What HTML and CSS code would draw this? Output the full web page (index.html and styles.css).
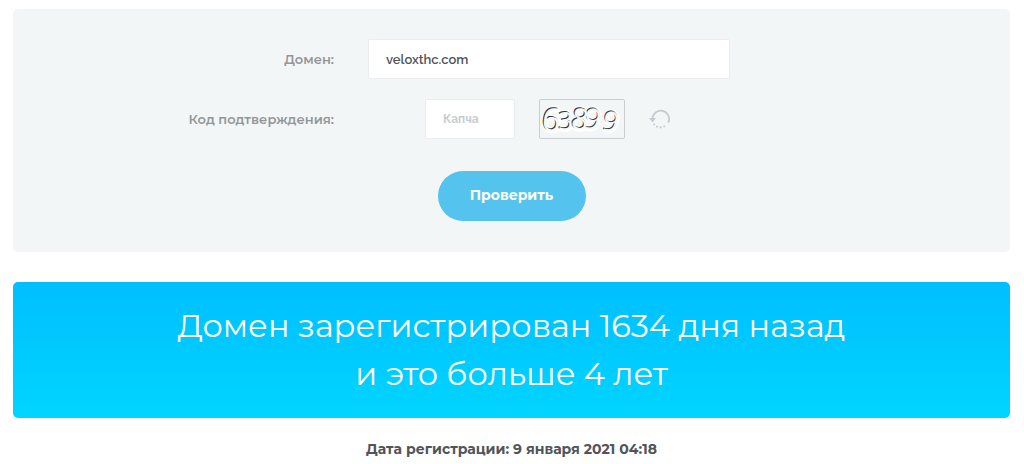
FILE: index.html
```html
<!DOCTYPE html>
<html lang="ru">
<head>
    <meta charset="UTF-8">
    <meta name="viewport" content="width=device-width, initial-scale=1.0">
    <title>Возраст домена</title>
    <link rel="stylesheet" href="styles.css">
</head>
<body>
    <form class="check-form">
        <div class="row">
            <label for="domain">Домен:</label>
            <input class="field domain" type="text" id="domain" name="domain" value="veloxthc.com">
        </div>
        <div class="row">
            <label for="captcha">Код подтверждения:</label>
            <div class="captcha">
                <input class="field code" type="text" id="captcha" name="captcha" placeholder="Капча">
                <svg class="captcha-image" viewBox="0 0 86 40" role="img" aria-label="Капча">
                    <defs>
                        <g id="digits">
                            <text x="0" y="32" font-size="34" transform="rotate(6 10 20)">6</text>
                            <text x="17" y="31" font-size="27">3</text>
                            <text x="31" y="30" font-size="31" transform="rotate(8 40 20)">8</text>
                            <text x="44" y="30" font-size="31" transform="rotate(12 52 20)">9</text>
                            <text x="64" y="32" font-size="29" transform="rotate(12 72 22)">9</text>
                        </g>
                    </defs>
                    <use class="digits-glow" href="#digits" x="1" y="1"/>
                    <use class="digits-dark" href="#digits"/>
                    <use class="digits-light" href="#digits" x="1" y="1"/>
                </svg>
                <button class="refresh" type="button" aria-label="Обновить">
                    <svg viewBox="0 0 22 22" width="22" height="22">
                        <path d="M3.5 11a8.3 8.3 0 1 1 15.8 3.6" fill="none" stroke="currentColor" stroke-width="1.8"/>
                        <path d="M0 10h7l-3.5 4.5z" fill="currentColor"/>
                        <g fill="currentColor">
                            <circle cx="5.2" cy="16.6" r="1"/>
                            <circle cx="8" cy="18.7" r="1"/>
                            <circle cx="11.7" cy="19.4" r="1.1"/>
                            <circle cx="15.3" cy="18.4" r="1"/>
                        </g>
                    </svg>
                </button>
            </div>
        </div>
        <button class="submit" type="submit">Проверить</button>
    </form>

    <div class="result">Домен зарегистрирован 1634 дня назад<br>и это больше 4 лет</div>
    <p class="date">Дата регистрации: 9 января 2021 04:18</p>
</body>
</html>
```

FILE: styles.css
```css
* {
    box-sizing: border-box;
}
body {
    margin: 9px 14px 0 13px;
    font-family: Montserrat, Inter, sans-serif;
    font-size: 13px;
    color: #50555a;
    background: #fff;
}
.check-form {
    display: flex;
    flex-direction: column;
    gap: 20px;
    padding: 30px 0 31px;
    border-radius: 5px;
    background: #f3f6f7;
}
.row {
    display: grid;
    grid-template-columns: 32.2% 36.3%;
    column-gap: 34px;
    align-items: center;
}
label {
    text-align: right;
    font-weight: 600;
    color: #929698;
}
.field {
    height: 40px;
    padding: 0 17px;
    border: 1px solid #eaedf0;
    border-radius: 2px;
    background: #fff;
    font-family: Raleway, "Open Sans", sans-serif;
    font-size: 13px;
    font-weight: 600;
    color: #50555a;
}
.field::placeholder {
    color: #c8ccd2;
    opacity: 1;
}
.domain {
    width: 100%;
}
.code {
    width: 90px;
    font-size: 12px;
    font-weight: 700;
}
.captcha {
    display: flex;
    justify-content: center;
    align-items: center;
    gap: 24px;
    padding-right: 2px;
}
.captcha-image {
    width: 86px;
    height: 40px;
    border: 1px solid #c9cdcf;
    border-radius: 2px;
    font-family: "Open Sans", sans-serif;
}
.digits-glow {
    fill: #fff;
    stroke: #fff;
    stroke-width: 4px;
    stroke-linejoin: round;
}
.digits-dark {
    fill: #333;
}
.digits-light {
    fill: #f6f8f9;
}
.refresh {
    display: flex;
    padding: 0;
    border: 0;
    background: none;
    color: #c6cbd0;
    cursor: pointer;
}
.submit {
    align-self: center;
    width: 148px;
    height: 50px;
    margin-top: 12px;
    padding: 0 0 2px;
    border: 0;
    border-radius: 25px;
    background: #54c3ed;
    color: #fff;
    font-family: inherit;
    font-size: 14px;
    font-weight: 700;
    cursor: pointer;
}
.result {
    margin-top: 30px;
    padding: 20px;
    border-radius: 5px;
    background: linear-gradient(#00bfff, #00d5ff);
    color: #fff;
    font-size: 32px;
    font-weight: 400;
    line-height: 48px;
    text-align: center;
}
.date {
    margin: 20px 0 0;
    font-size: 14px;
    font-weight: 700;
    line-height: 22px;
    text-align: center;
}
```
